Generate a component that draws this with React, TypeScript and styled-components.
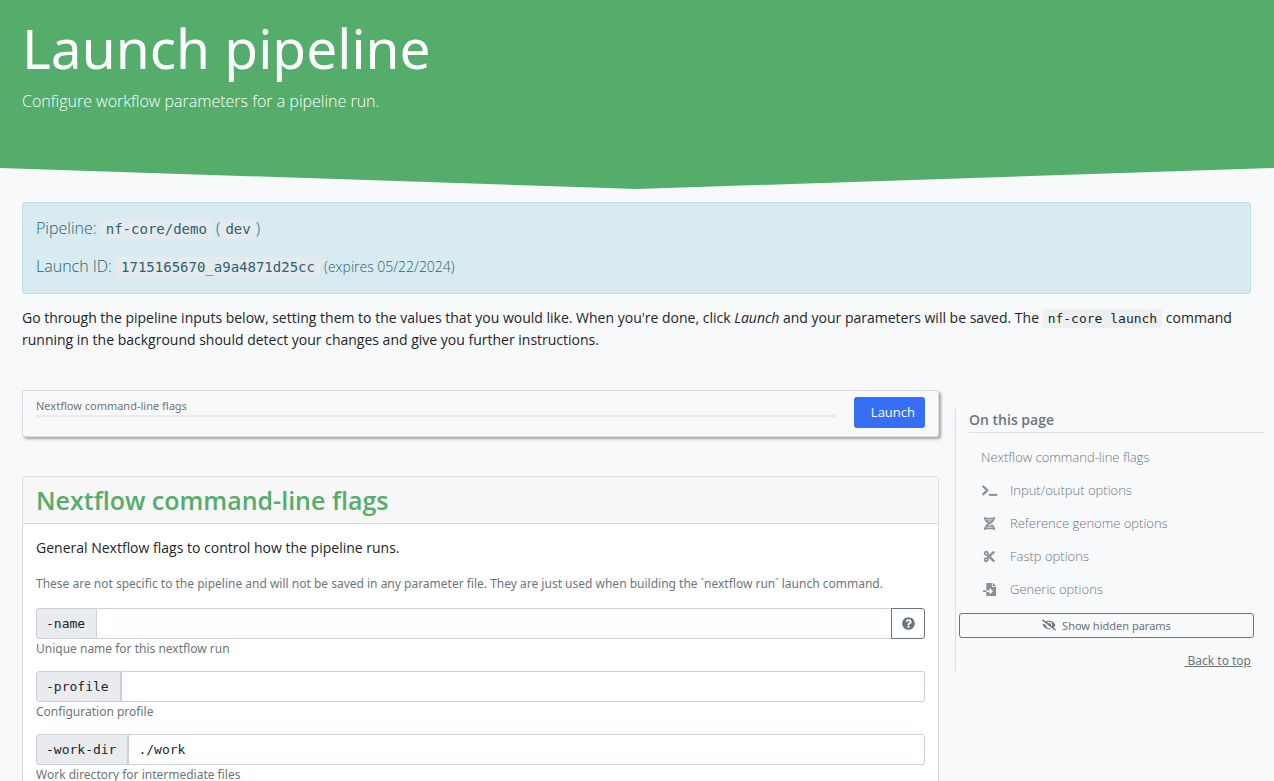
import React from "react";
import styled, { createGlobalStyle } from "styled-components";
import {
  FaDna,
  FaCut,
  FaFileImport,
  FaEyeSlash,
  FaQuestionCircle,
} from "react-icons/fa";

const sans = `"Open Sans", "Noto Sans", sans-serif`;
const wideSans = `"Noto Sans", "Open Sans", sans-serif`;
const mono = `"DejaVu Sans Mono", "Liberation Mono", monospace`;

const GlobalStyle = createGlobalStyle`
  *, *::before, *::after { box-sizing: border-box; }
  html { scrollbar-width: none; }
  body {
    margin: 0;
    background: #f8f9fb;
    color: #212529;
    font-family: ${sans};
    font-size: 14px;
    line-height: 22px;
  }
`;

const Hero = styled.header`
  padding: 14px 22px 75px;
  background: #54ad6a;
  color: #fff;
  clip-path: polygon(
    0 0,
    100% 0,
    100% calc(100% - 21px),
    50% 100%,
    0 calc(100% - 21px)
  );
`;

const HeroTitle = styled.h1`
  margin: 0;
  font-family: ${wideSans};
  font-size: 55px;
  font-weight: 400;
  line-height: 68px;
`;

const Lead = styled.p`
  margin: 7px 0 0;
  font-size: 16px;
  font-weight: 300;
  line-height: 25px;
`;

const Intro = styled.section`
  padding: 13px 23px 0 22px;
`;

const Alert = styled.div`
  display: flex;
  flex-direction: column;
  gap: 11px;
  padding: 12px 13px 13px;
  border: 1px solid #bde1e7;
  border-radius: 3px;
  background: #d8ebf0;
  color: #2a6470;
`;

const AlertLine = styled.p`
  margin: 0;
  font-size: 16px;
  font-weight: 300;
  line-height: 27px;

  small {
    font-size: 14px;
    line-height: 1;
  }
`;

const Code = styled.code<{ $size: number }>`
  padding: 2px 5px;
  border-radius: 3px;
  background: ${(p) => (p.$size > 13 ? "#e4eaee" : "#eeeff1")};
  font-family: ${mono};
  font-size: ${(p) => p.$size}px;
  font-weight: 400;
  line-height: 1;
`;

const Text = styled.p<{ $muted?: boolean }>`
  margin: 0 0 ${(p) => (p.$muted ? 13 : 14)}px;
  color: ${(p) => (p.$muted ? "#6c757d" : "#212529")};
  font-family: ${(p) => (p.$muted ? wideSans : sans)};
  font-size: ${(p) => (p.$muted ? 12 : 14)}px;
  line-height: 22px;
`;

const IntroText = styled(Text)`
  margin: 13px 0 39px;
`;

const Columns = styled.div`
  display: grid;
  grid-template-columns: minmax(0, 1fr) 319px;
  align-items: start;
`;

const Main = styled.main`
  padding: 0 16px 0 22px;
`;

const Toolbar = styled.div`
  display: flex;
  align-items: flex-start;
  gap: 18px;
  margin-bottom: 39px;
  padding: 6px 13px 8px;
  border: 1px solid #dcdee0;
  border-radius: 3px;
  background: #f8f9fb;
  box-shadow: 2px 2px 3px rgba(0, 0, 0, 0.35);
`;

const Progress = styled.div`
  flex: 1;
  border-bottom: 2px solid #e9ebee;
  color: #6c757d;
  font-family: ${wideSans};
  font-size: 11px;
  line-height: 18px;
`;

const LaunchButton = styled.button`
  height: 31px;
  padding: 0 10px 2px 17px;
  border: 0;
  border-radius: 3px;
  background: #366ef5;
  color: #fff;
  font: 13px ${sans};
  cursor: pointer;
`;

const Card = styled.section`
  border: 1px solid #d9dbdd;
  border-radius: 4px 4px 0 0;
  border-bottom: 0;
  background: #fff;
`;

const CardTitle = styled.h2`
  margin: 0;
  padding: 6px 13px;
  border-bottom: 1px solid #d9dbdd;
  border-radius: 4px 4px 0 0;
  background: #f7f7f7;
  color: #54ad6a;
  font-size: 25px;
  font-weight: 600;
  line-height: 34px;
`;

const CardBody = styled.div`
  padding: 13px 13px 0;
`;

const Field = styled.div`
  margin-bottom: 12px;
`;

const InputGroup = styled.div`
  display: flex;
  height: 31px;
`;

const FieldLabel = styled.label`
  display: flex;
  align-items: center;
  padding: 0 11px 0 9px;
  border: 1px solid #cbd0d6;
  border-radius: 3px 0 0 3px;
  background: #e9ebef;
  font-family: ${mono};
  font-size: 13px;
`;

const FieldInput = styled.input<{ $joined?: boolean }>`
  flex: 1;
  min-width: 0;
  padding: 0 9px;
  border: 1px solid #cbd0d6;
  border-left-width: ${(p) => (p.$joined ? 0 : 1)}px;
  border-right-width: ${(p) => (p.$joined ? 0 : 1)}px;
  border-radius: ${(p) => (p.$joined ? "0" : "0 3px 3px 0")};
  background: #fff;
  color: #212529;
  font-family: ${mono};
  font-size: 13px;
`;

const HelpButton = styled.button`
  display: flex;
  align-items: center;
  justify-content: center;
  width: 34px;
  padding: 0;
  border: 1px solid #6c757d;
  border-radius: 0 3px 3px 0;
  background: #fff;
  color: #6c757d;
  font-size: 13px;
  cursor: pointer;
`;

const HelpText = styled.div`
  color: #6c757d;
  font-family: ${wideSans};
  font-size: 12px;
  line-height: 20px;
`;

const Sidebar = styled.aside`
  margin-top: 19px;
  padding: 0 10px 0 3px;
  border-left: 1px solid #dee0e3;
  color: #6c757d;
`;

const SidebarTitle = styled.h3`
  margin: 0 0 8px 10px;
  padding-bottom: 2px;
  border-bottom: 1px solid #dee0e3;
  font-size: 14px;
  font-weight: 600;
  line-height: 21px;
`;

const SidebarNav = styled.nav`
  display: flex;
  flex-direction: column;
  margin-left: 22px;
`;

const NavLink = styled.a`
  display: flex;
  align-items: center;
  gap: 12px;
  color: #6c757d;
  font-size: 13px;
  font-weight: 300;
  line-height: 33px;
  text-decoration: none;
`;

const NavIcon = styled.span<{ $wide?: boolean }>`
  display: inline-flex;
  justify-content: center;
  width: 17px;
  color: #8b9198;

  svg {
    width: ${(p) => (p.$wide ? 17 : 13)}px;
    height: 13px;
  }
`;

const HiddenButton = styled.button`
  display: flex;
  align-items: center;
  justify-content: center;
  gap: 6px;
  width: calc(100% - 10px);
  height: 25px;
  margin-top: 7px;
  padding: 0 0 1px;
  border: 1px solid #6c757d;
  border-radius: 3px;
  background: transparent;
  color: #6c757d;
  font: 11px ${wideSans};
  cursor: pointer;

  svg {
    font-size: 14px;
  }
`;

const BackRow = styled.div`
  padding: 13px 13px 0 0;
  font-family: ${wideSans};
  font-size: 12px;
  line-height: 20px;
  text-align: right;

  a {
    color: #6c757d;
    white-space: pre;
  }
`;

function TerminalIcon() {
  return (
    <svg viewBox="0 0 17 13" fill="none" stroke="currentColor" strokeWidth="2">
      <path d="M1.6 1.7 6.3 6.3 1.6 10.9" strokeWidth="2.2" />
      <path d="M8 10.9h8.4" />
    </svg>
  );
}

const sections = [
  { title: "Nextflow command-line flags" },
  { title: "Input/output options", icon: TerminalIcon, wide: true },
  { title: "Reference genome options", icon: FaDna },
  { title: "Fastp options", icon: FaCut },
  { title: "Generic options", icon: FaFileImport },
];

const fields = [
  { id: "name", value: "", help: "Unique name for this nextflow run", info: true },
  { id: "profile", value: "", help: "Configuration profile" },
  { id: "work-dir", value: "./work", help: "Work directory for intermediate files" },
];

export default function App() {
  return (
    <>
      <GlobalStyle />
      <Hero id="top">
        <HeroTitle>Launch pipeline</HeroTitle>
        <Lead>Configure workflow parameters for a pipeline run.</Lead>
      </Hero>
      <Intro>
        <Alert>
          <AlertLine>
            Pipeline: <Code $size={14}>nf-core/demo</Code> (
            <Code $size={14}>dev</Code>)
          </AlertLine>
          <AlertLine>
            Launch ID: <Code $size={14}>1715165670_a9a4871d25cc</Code>{" "}
            <small>(expires 05/22/2024)</small>
          </AlertLine>
        </Alert>
        <IntroText>
          Go through the pipeline inputs below, setting them to the values that
          you would like. When you're done, click <em>Launch</em> and your
          parameters will be saved. The <Code $size={13}>nf-core launch</Code>{" "}
          command running in the background should detect your changes and give
          you further instructions.
        </IntroText>
      </Intro>
      <Columns>
        <Main>
          <Toolbar>
            <Progress>Nextflow command-line flags</Progress>
            <LaunchButton type="button">Launch</LaunchButton>
          </Toolbar>
          <Card id="section-0">
            <CardTitle>Nextflow command-line flags</CardTitle>
            <CardBody>
              <Text>General Nextflow flags to control how the pipeline runs.</Text>
              <Text $muted>
                These are not specific to the pipeline and will not be saved in
                any parameter file. They are just used when building the
                `nextflow run` launch command.
              </Text>
              {fields.map((f) => (
                <Field key={f.id}>
                  <InputGroup>
                    <FieldLabel htmlFor={f.id}>-{f.id}</FieldLabel>
                    <FieldInput
                      id={f.id}
                      type="text"
                      defaultValue={f.value}
                      $joined={f.info}
                    />
                    {f.info && (
                      <HelpButton type="button" aria-label="Show help">
                        <FaQuestionCircle />
                      </HelpButton>
                    )}
                  </InputGroup>
                  <HelpText>{f.help}</HelpText>
                </Field>
              ))}
            </CardBody>
          </Card>
        </Main>
        <Sidebar>
          <SidebarTitle>On this page</SidebarTitle>
          <SidebarNav>
            {sections.map(({ title, icon: Icon, wide }, i) => (
              <NavLink key={title} href={`#section-${i}`}>
                {Icon && (
                  <NavIcon $wide={wide}>
                    <Icon />
                  </NavIcon>
                )}
                {title}
              </NavLink>
            ))}
          </SidebarNav>
          <HiddenButton type="button">
            <FaEyeSlash />
            Show hidden params
          </HiddenButton>
          <BackRow>
            <a href="#top"> Back to top</a>
          </BackRow>
        </Sidebar>
      </Columns>
    </>
  );
}
